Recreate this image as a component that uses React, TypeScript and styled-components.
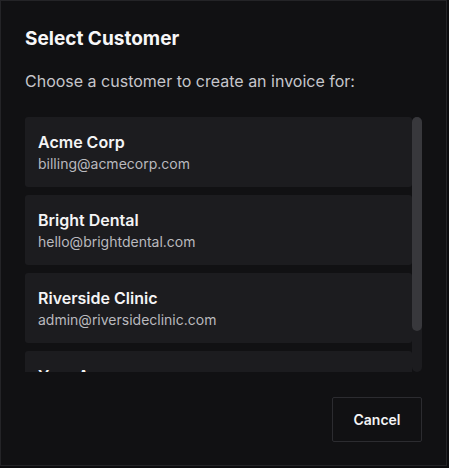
import React from "react";
import styled, { createGlobalStyle } from "styled-components";

type Customer = {
  id: string;
  name: string;
  email: string;
};

const customers: Customer[] = [
  { id: "acme", name: "Acme Corp", email: "billing@acmecorp.com" },
  { id: "bright", name: "Bright Dental", email: "hello@brightdental.com" },
  { id: "riverside", name: "Riverside Clinic", email: "admin@riversideclinic.com" },
  { id: "agency", name: "Your Agency", email: "studio@youragency.com" },
];

// list viewport vs. full content height, used to size the scroll thumb
const LIST_HEIGHT = 255;
const CONTENT_HEIGHT = customers.length * 70 + (customers.length - 1) * 8;

const App = () => {
  const thumbHeight = Math.round((LIST_HEIGHT / CONTENT_HEIGHT) * LIST_HEIGHT);

  return (
    <>
      <GlobalStyle />
      <Dialog role="dialog" aria-labelledby="select-customer-title">
        <Title id="select-customer-title">Select Customer</Title>
        <Description>Choose a customer to create an invoice for:</Description>
        <ListFrame>
          <CustomerList>
            {customers.map((customer) => (
              <CustomerCard key={customer.id} type="button">
                <CustomerName>{customer.name}</CustomerName>
                <CustomerEmail>{customer.email}</CustomerEmail>
              </CustomerCard>
            ))}
          </CustomerList>
          <ScrollTrack aria-hidden>
            <ScrollThumb style={{ height: thumbHeight }} />
          </ScrollTrack>
        </ListFrame>
        <Footer>
          <CancelButton type="button">Cancel</CancelButton>
        </Footer>
      </Dialog>
    </>
  );
};

const GlobalStyle = createGlobalStyle`
  *, *::before, *::after {
    box-sizing: border-box;
  }

  html, body {
    margin: 0;
    padding: 0;
    height: 100%;
    background: #0c0c0e;
  }

  body {
    font-family: Inter, "Noto Sans", sans-serif;
    color: #f4f4f5;
    -webkit-font-smoothing: antialiased;
  }
`;

const Dialog = styled.div`
  width: 447px;
  height: 466px;
  display: flex;
  flex-direction: column;
  padding: 24px;
  background: #111113;
  border: 1px solid #242427;
`;

const Title = styled.h2`
  margin: 0;
  font-size: 19px;
  line-height: 28px;
  font-weight: 700;
  color: #f7f7f8;
`;

const Description = styled.p`
  margin: 16px 0 0;
  font-size: 16px;
  line-height: 24px;
  color: #c6c6cb;
`;

const ListFrame = styled.div`
  margin-top: 24px;
  height: ${LIST_HEIGHT}px;
  display: flex;
`;

const CustomerList = styled.div`
  flex: 1;
  min-width: 0;
  display: flex;
  flex-direction: column;
  gap: 8px;
  overflow: hidden;
`;

const ScrollTrack = styled.div`
  flex: 0 0 10px;
  display: flex;
  flex-direction: column;
  background: #1c1c1f;
  border-radius: 5px;
`;

const ScrollThumb = styled.div`
  width: 100%;
  background: #38383c;
  border-radius: 5px;
`;

const CustomerCard = styled.button`
  flex: 0 0 auto;
  display: flex;
  flex-direction: column;
  align-items: flex-start;
  width: 100%;
  height: 70px;
  padding: 13px 13px;
  border: none;
  border-radius: 3px;
  background: #1c1c1f;
  font-family: inherit;
  text-align: left;
  cursor: pointer;

  &:hover {
    background: #232327;
  }
`;

const CustomerName = styled.span`
  font-size: 16px;
  line-height: 24px;
  font-weight: 600;
  color: #f4f4f5;
`;

const CustomerEmail = styled.span`
  font-size: 14px;
  line-height: 20px;
  color: #b9b9be;
`;

const Footer = styled.div`
  margin-top: 25px;
  display: flex;
  justify-content: flex-end;
`;

const CancelButton = styled.button`
  width: 90px;
  height: 45px;
  border: 1px solid #2c2c30;
  border-radius: 2px;
  background: transparent;
  color: #f4f4f5;
  font-family: inherit;
  font-size: 14px;
  font-weight: 600;
  cursor: pointer;

  &:hover {
    background: #1a1a1d;
  }
`;

export default App;
